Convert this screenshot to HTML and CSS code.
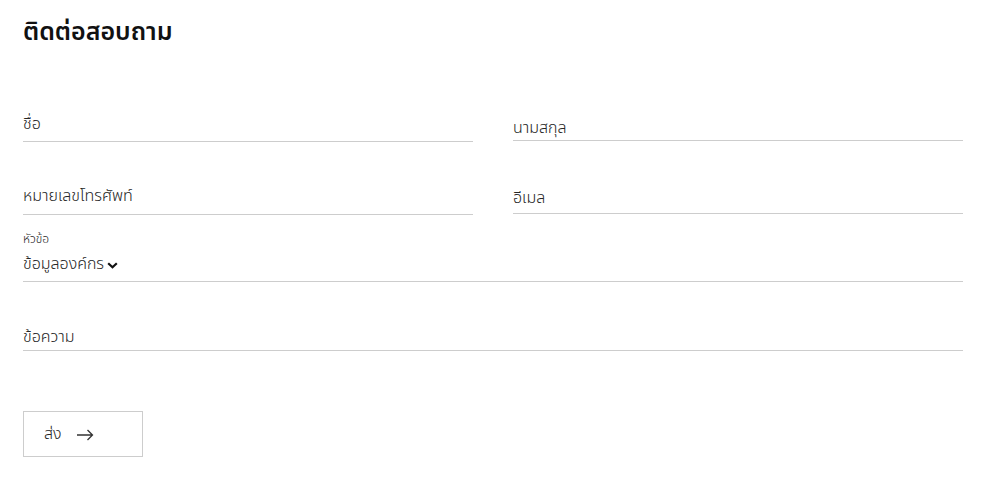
FILE: index.html
```html
<!DOCTYPE html>
<html lang="th">
<head>
<meta charset="utf-8">
<link rel="stylesheet" href="styles.css">
</head>
<body>
<main class="contact">
  <h1 class="title">ติดต่อสอบถาม</h1>
  <form class="form">
    <div class="row row-1">
      <div class="field field-a"><span class="ph">ชื่อ</span></div>
      <div class="field field-b"><span class="ph">นามสกุล</span></div>
    </div>
    <div class="row row-2">
      <div class="field field-a"><span class="ph">หมายเลขโทรศัพท์</span></div>
      <div class="field field-b"><span class="ph">อีเมล</span></div>
    </div>
    <div class="field select">
      <span class="small-label">หัวข้อ</span>
      <span class="ph value">ข้อมูลองค์กร<svg class="chev" width="11" height="7" viewBox="0 0 11 7"><path d="M1.2 1.2 L5.5 5.3 L9.8 1.2" fill="none" stroke="#111" stroke-width="2.2"/></svg></span>
    </div>
    <div class="field message"><span class="ph">ข้อความ</span></div>
    <button type="button" class="send"><span>ส่ง</span><svg class="arrow" width="18" height="12" viewBox="0 0 18 12"><path d="M1 6 H16.5 M11.5 1 L16.5 6 L11.5 11" fill="none" stroke="#333" stroke-width="1.3"/></svg></button>
  </form>
</main>
</body>
</html>
```

FILE: styles.css
```css
html, body {
  margin: 0;
  background: #fff;
}
body {
  font-family: "Noto Sans Thai", "Noto Sans", sans-serif;
  font-weight: 300;
  color: #262626;
}
.contact {
  width: 940px;
  padding-left: 23px;
}
.title {
  margin: 0;
  padding-top: 12px;
  font-size: 25px;
  font-weight: 600;
  color: #111;
  line-height: 40px;
}
.form {
  display: flex;
  flex-direction: column;
  margin-top: 48px;
}
.row {
  display: grid;
  grid-template-columns: 450px 450px;
  column-gap: 40px;
  align-items: start;
}
.row-2 {
  margin-top: 32px;
}
.field {
  border-bottom: 1px solid #cdcdcd;
  display: flex;
  flex-direction: column;
}
.ph {
  font-size: 16px;
  line-height: 24px;
  display: flex;
  align-items: center;
}
.row-1 .field-a { padding: 12px 0 5px; }
.row-1 .field-b { padding: 16px 0 0; }
.row-2 .field-a { padding: 10px 0 6px; }
.row-2 .field-b { padding: 12px 0 3px; }
.select {
  padding: 16px 0 5px;
}
.small-label {
  font-size: 12px;
  line-height: 16px;
}
.value {
  margin-top: 5px;
}
.chev {
  margin-left: 3px;
  margin-top: 3px;
}
.message {
  padding: 43px 0 1px;
}
.send {
  margin-top: 60px;
  width: 120px;
  height: 46px;
  box-sizing: border-box;
  border: 1px solid #cdcdcd;
  background: #fff;
  font-family: inherit;
  font-weight: 300;
  font-size: 16px;
  color: #262626;
  padding: 0 0 0 20px;
  display: flex;
  align-items: center;
  gap: 14px;
  cursor: pointer;
}
.arrow {
  margin-top: 1px;
}
```
